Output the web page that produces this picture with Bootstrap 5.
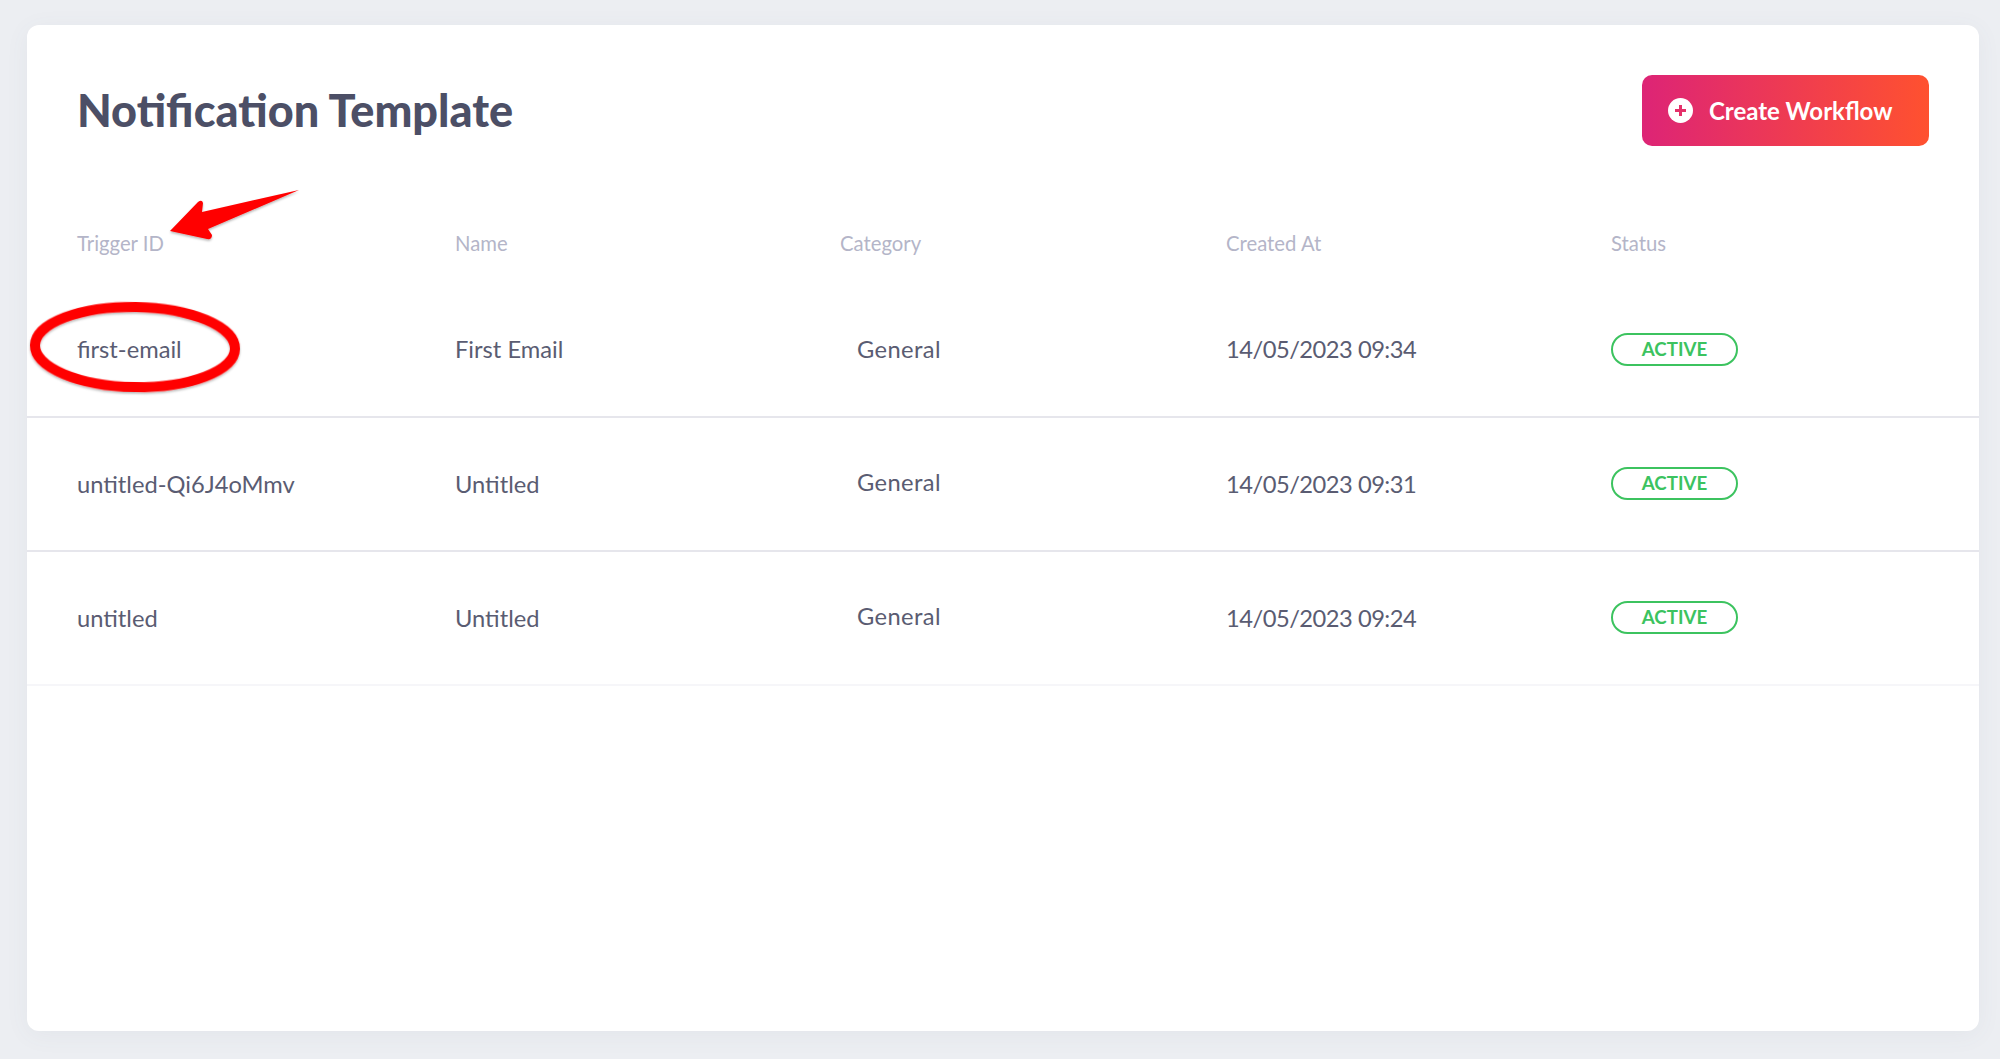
<!DOCTYPE html>
<html lang="en">
<head>
  <meta charset="UTF-8" />
  <title>Notification Template</title>
  <meta name="viewport" content="width=device-width, initial-scale=1" />
  <link href="https://cdn.jsdelivr.net/npm/bootstrap@5.3.0/dist/css/bootstrap.min.css" rel="stylesheet" />
  <style>
    body {
      background: #eceef2;
      font-family: Lato, "Liberation Sans", sans-serif;
      color: #555770;
      padding: 25px 21px 28px 27px;
      height: 1059px;
      overflow: hidden;
    }
    .tpl-card {
      height: 1006px;
      border: 0;
      border-radius: 12px;
      box-shadow: 0 4px 24px rgba(90, 95, 120, 0.06);
    }
    .tpl-head {
      padding: 50px 50px 0 50px;
      height: 178px;
    }
    .tpl-title {
      font-size: 45px;
      font-weight: 900;
      color: #4c4f66;
      margin: 0;
      line-height: 70px;
    }
    .btn-create {
      width: 287px;
      height: 71px;
      border: 0;
      border-radius: 10px;
      padding: 0 0 0 26px;
      font-size: 24px;
      font-weight: 700;
      color: #fff;
      background: linear-gradient(90deg, #dd2476, #ff512f);
    }
    .btn-create:hover { color: #fff; }
    .tpl-table {
      table-layout: fixed;
      --bs-table-bg: transparent;
      --bs-table-color: #5a5c72;
    }
    .tpl-table th, .tpl-table td {
      padding: 0;
      vertical-align: middle;
    }
    .tpl-table th {
      height: 80px;
      padding-top: 1px;
      font-size: 20.3px;
      font-weight: 400;
      color: #b4b5c8;
    }
    .tpl-table td {
      height: 134px;
      font-size: 23.7px;
      border-bottom: 2px solid #e6e6ec;
    }
    .tpl-table tr + tr td { padding-top: 2px; }
    .tpl-table tr:last-child td { border-bottom-color: #f6f6f9; }
    .tpl-table .first-cell { padding-left: 50px; }
    .tpl-table .cat-cell span { padding-left: 17px; letter-spacing: 0.4px; }
    .tpl-table .date-cell { letter-spacing: -0.5px; }
    .tpl-table tr + tr .cat-cell span { position: relative; top: -2px; }
    .tpl-table tr + tr .status-pill { top: -2px; }
    .status-pill {
      display: block;
      width: 127px;
      height: 33px;
      line-height: 29px;
      border: 2px solid #3cc35f;
      border-radius: 17px;
      color: #3cc35f;
      font-size: 18.7px;
      font-weight: 700;
      text-align: center;
      position: relative;
    }
    .mark-up {
      position: absolute;
      left: -27px;
      top: -25px;
      pointer-events: none;
    }
  </style>
</head>
<body>
  <div class="card tpl-card position-relative">
    <div class="d-flex justify-content-between align-items-start tpl-head">
      <h1 class="tpl-title">Notification Template</h1>
      <button class="btn btn-create d-flex align-items-center gap-3">
        <svg width="25" height="25" viewBox="0 0 25 25">
          <circle cx="12.5" cy="12.5" r="12.5" fill="#fff" />
          <path d="M12.5 7v11M7 12.5h11" stroke="#e5306a" stroke-width="3" />
        </svg>
        Create Workflow
      </button>
    </div>

    <table class="table table-borderless mb-0 tpl-table">
      <colgroup>
        <col style="width:428px" />
        <col style="width:385px" />
        <col style="width:386px" />
        <col style="width:385px" />
        <col />
      </colgroup>
      <thead>
        <tr>
          <th class="first-cell">Trigger ID</th>
          <th>Name</th>
          <th>Category</th>
          <th>Created At</th>
          <th>Status</th>
        </tr>
      </thead>
      <tbody>
        <tr>
          <td class="first-cell">first-email</td>
          <td>First Email</td>
          <td class="cat-cell"><span>General</span></td>
          <td class="date-cell">14/05/2023 09:34</td>
          <td><span class="status-pill">ACTIVE</span></td>
        </tr>
        <tr>
          <td class="first-cell">untitled-Qi6J4oMmv</td>
          <td>Untitled</td>
          <td class="cat-cell"><span>General</span></td>
          <td class="date-cell">14/05/2023 09:31</td>
          <td><span class="status-pill">ACTIVE</span></td>
        </tr>
        <tr>
          <td class="first-cell">untitled</td>
          <td>Untitled</td>
          <td class="cat-cell"><span>General</span></td>
          <td class="date-cell">14/05/2023 09:24</td>
          <td><span class="status-pill">ACTIVE</span></td>
        </tr>
      </tbody>
    </table>

    <!-- red markup drawn over the screenshot -->
    <svg class="mark-up" width="320" height="420" viewBox="0 0 320 420">
      <defs>
        <filter id="soft" x="-10%" y="-10%" width="120%" height="130%">
          <feDropShadow dx="0" dy="1.5" stdDeviation="1.2" flood-color="#000" flood-opacity="0.3" />
        </filter>
      </defs>
      <path d="M170 231 L198 202 Q202 199 203 203 L202 212 L299 190 L208 229 L212 235 Q212 240 207 239 Z" fill="#f00" filter="url(#soft)" />
      <ellipse cx="135" cy="347" rx="100" ry="40" transform="rotate(1 135 347)" fill="none" stroke="#f00" stroke-width="10" filter="url(#soft)" />
    </svg>
  </div>

  <script src="https://cdn.jsdelivr.net/npm/bootstrap@5.3.0/dist/js/bootstrap.bundle.min.js"></script>
</body>
</html>
